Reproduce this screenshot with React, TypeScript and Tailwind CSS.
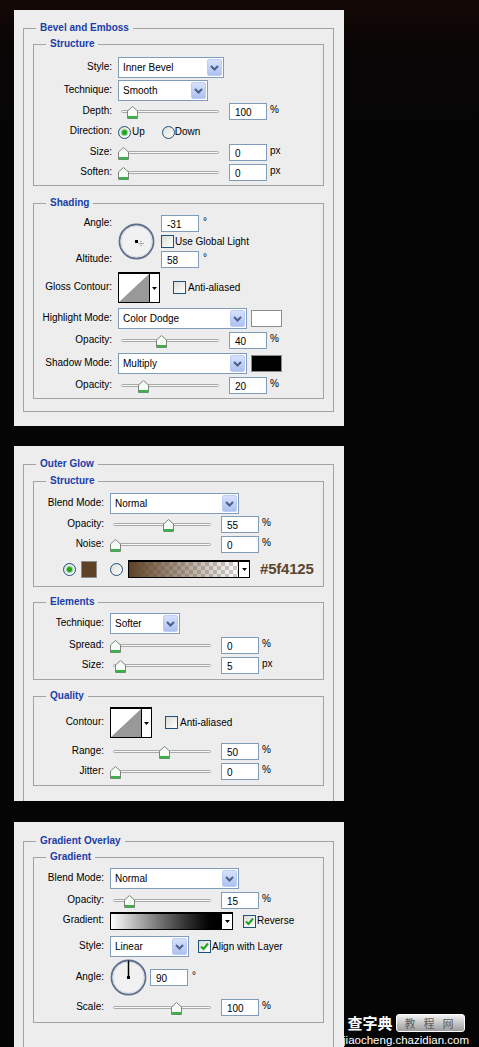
import React from 'react';

type Kids = { children?: React.ReactNode };

const Group = ({ title, className = '', children }: { title: string; className?: string } & Kids) => (
  <fieldset className={`border border-[#a3a3a3] ${className}`}>
    <legend className="ml-[12px] px-[4px] text-[10px] font-bold leading-[12px] text-[#1a3ea8]">{title}</legend>
    {children}
  </fieldset>
);

const Row = ({ label, lw, className = '', children }: { label?: string; lw: string; className?: string } & Kids) => (
  <div className={`flex items-center ${className}`}>
    <span className={`${lw} shrink-0 pb-[2px] pr-[6px] text-right`}>{label}</span>
    {children}
  </div>
);

const Chevron = () => (
  <svg width="9" height="6" viewBox="0 0 9 6">
    <path d="M1 1 L4.5 4.5 L8 1" fill="none" stroke="#4a5f8a" strokeWidth="2" />
  </svg>
);

const Select = ({ value, w }: { value: string; w: string }) => (
  <div className={`${w} flex h-[21px] shrink-0 items-center justify-between border border-[#7f9db9] bg-white pl-[4px] pr-[1px]`}>
    <span className="pt-[1px]">{value}</span>
    <span className="flex h-[17px] w-[15px] items-center justify-center rounded-[2px] border border-[#bccdf3] bg-gradient-to-b from-[#d6e1fc] to-[#adc1f0]">
      <Chevron />
    </span>
  </div>
);

const Field = ({ value, unit }: { value: string; unit?: string }) => (
  <>
    <div className="h-[17px] w-[38px] shrink-0 border border-[#7f9db9] bg-white pl-[5px] pt-[1px] leading-[15px]">{value}</div>
    {unit && <span className="ml-[3px] pb-[3px]">{unit}</span>}
  </>
);

const Degree = () => <span className="ml-[4px] pt-[2px] leading-[10px]">°</span>;

const Slider = ({ at }: { at: number }) => (
  <div className="relative mr-[7px] flex h-[17px] w-[104px] shrink-0 items-center px-[3px]">
    <div className="h-[3px] flex-1 rounded-full border border-[#a9a9a9] bg-[#f7f7f7]" />
    <svg className="absolute top-[3px]" style={{ left: at }} width="11" height="13" viewBox="0 0 11 13">
      <path d="M0.5 12.5 V5 L5.5 0.5 L10.5 5 V12.5 Z" fill="#f5fbf5" stroke="#7d857d" />
      <rect x="1" y="10" width="9" height="2.5" fill="#3cb04a" />
    </svg>
  </div>
);

const SliderRow = ({ label, lw, at, value, unit, className = '' }: { label: string; lw: string; at: number; value: string; unit: string; className?: string }) => (
  <Row label={label} lw={lw} className={`h-[17px] ${className}`}>
    <Slider at={at} />
    <Field value={value} unit={unit} />
  </Row>
);

const Radio = ({ on }: { on?: boolean }) => (
  <span className="flex h-[13px] w-[13px] shrink-0 items-center justify-center rounded-full border border-[#1c5180] bg-gradient-to-br from-[#dcdcd6] to-white">
    {on && <span className="h-[5px] w-[5px] rounded-full bg-[#21a121] shadow-[0_0_0_1px_#8fd48f]" />}
  </span>
);

const Check = ({ on }: { on?: boolean }) => (
  <span className="flex h-[13px] w-[13px] shrink-0 items-center justify-center border border-[#1c5180] bg-gradient-to-br from-[#dcdcd6] to-white">
    {on && (
      <svg width="9" height="9" viewBox="0 0 9 9">
        <path d="M1 4.5 L3.5 7 L8 1.5" fill="none" stroke="#21a121" strokeWidth="2" />
      </svg>
    )}
  </span>
);

const DropArrow = () => (
  <svg width="5" height="3" viewBox="0 0 5 3">
    <polygon points="0,0 5,0 2.5,3" fill="#000" />
  </svg>
);

const Contour = () => (
  <div className="flex h-[31px] w-[42px] shrink-0 border border-t-2 border-black bg-white">
    <svg width="30" height="28" viewBox="0 0 30 28" preserveAspectRatio="none">
      <polygon points="0,28 30,0 30,28" fill="#999" />
    </svg>
    <div className="flex flex-1 items-center justify-center border-l border-black">
      <DropArrow />
    </div>
  </div>
);

const GradientBox = ({ w, fill }: { w: string; fill: string }) => (
  <div className={`${w} flex h-[18px] shrink-0 border border-t-2 border-black bg-white`}>
    <div className={`flex-1 ${fill}`} />
    <div className="flex w-[11px] items-center justify-center border-l border-black">
      <DropArrow />
    </div>
  </div>
);

const Dial = ({ mode }: { mode: 'dot' | 'line' }) => (
  <svg width="37" height="37" viewBox="0 0 37 37" className="shrink-0">
    <circle cx="18.5" cy="18.5" r="17" fill="#f1f1f1" stroke="#5f6e8c" strokeWidth="1.8" />
    <circle cx="18.5" cy="18.5" r="15.5" fill="none" stroke="#d6d9df" strokeWidth="1" />
    {mode === 'dot' ? (
      <>
        <rect x="17" y="17" width="3" height="3" fill="#000" />
        <path d="M23 18 V23 M20.5 20.5 H25.5" stroke="#777" strokeWidth="1" strokeDasharray="1 1" />
      </>
    ) : (
      <>
        <line x1="18.5" y1="18.5" x2="18.5" y2="1.5" stroke="#000" strokeWidth="1.5" />
        <rect x="17" y="17" width="3" height="3" fill="#000" />
      </>
    )}
  </svg>
);

const P1 = 'w-[84px]';
const P2 = 'w-[76px]';

const Inner = ({ title, className = '', pad, children }: { title: string; className?: string; pad: string } & Kids) => (
  <Group title={title} className={`mx-[9px] ${className}`}>
    <div className={`flex flex-col ${pad}`}>{children}</div>
  </Group>
);

export default function App() {
  return (
    <div className="relative h-[1047px] w-[479px] overflow-hidden bg-[#050404] [background-image:linear-gradient(#150806,#080505_50px,#050505_200px)] font-['Liberation_Sans',Arial,sans-serif] text-[10px] leading-[12px] text-black">
      <div className="flex flex-col pl-[14px] pt-[10px]">
        {/* Bevel and Emboss */}
        <div className="h-[416px] w-[330px] overflow-hidden bg-[#ededed] pl-[9px] pr-[10px] pt-[12px]">
          <Group title="Bevel and Emboss" className="pb-[12px] pt-[4px]">
            <Inner title="Structure" pad="pt-[7px] pb-[4px]">
              <Row label="Style:" lw={P1}>
                <Select value="Inner Bevel" w="w-[106px]" />
              </Row>
              <Row label="Technique:" lw={P1} className="mt-[2px]">
                <Select value="Smooth" w="w-[90px]" />
              </Row>
              <SliderRow label="Depth:" lw={P1} at={9} value="100" unit="%" className="mt-[2px]" />
              <Row label="Direction:" lw={P1} className="mt-[5px] h-[14px]">
                <Radio on />
                <span className="ml-[1px]">Up</span>
                <span className="ml-[17px]">
                  <Radio />
                </span>
                <span className="ml-[0px]">Down</span>
              </Row>
              <SliderRow label="Size:" lw={P1} at={0} value="0" unit="px" className="mt-[5px]" />
              <SliderRow label="Soften:" lw={P1} at={0} value="0" unit="px" className="mt-[3px]" />
            </Inner>

            <Inner title="Shading" className="mt-[11px]" pad="pt-[6px] pb-[4px]">
              <div className="flex h-[53px]">
                <div className={`${P1} flex shrink-0 flex-col justify-between pr-[6px] text-right`}>
                  <span className="h-[17px] leading-[15px]">Angle:</span>
                  <span className="h-[17px] leading-[15px]">Altitude:</span>
                </div>
                <div className="self-center">
                  <Dial mode="dot" />
                </div>
                <div className="ml-[6px] flex flex-col">
                  <div className="flex items-start">
                    <Field value="-31" />
                    <Degree />
                  </div>
                  <div className="mt-[3px] flex items-center">
                    <Check />
                    <span className="ml-[1px]">Use Global Light</span>
                  </div>
                  <div className="mt-[3px] flex items-start">
                    <Field value="58" />
                    <Degree />
                  </div>
                </div>
              </div>
              <Row label="Gloss Contour:" lw={P1} className="mt-[4px]">
                <Contour />
                <span className="ml-[13px]">
                  <Check />
                </span>
                <span className="ml-[2px]">Anti-aliased</span>
              </Row>
              <Row label="Highlight Mode:" lw={P1} className="mt-[5px]">
                <Select value="Color Dodge" w="w-[129px]" />
                <span className="ml-[4px] h-[17px] w-[31px] border border-[#8d8d8d] bg-white" />
              </Row>
              <SliderRow label="Opacity:" lw={P1} at={38} value="40" unit="%" className="mt-[3px]" />
              <Row label="Shadow Mode:" lw={P1} className="mt-[4px]">
                <Select value="Multiply" w="w-[129px]" />
                <span className="ml-[4px] h-[17px] w-[31px] border border-[#8d8d8d] bg-black" />
              </Row>
              <SliderRow label="Opacity:" lw={P1} at={20} value="20" unit="%" className="mt-[3px]" />
            </Inner>
          </Group>
        </div>

        {/* Outer Glow */}
        <div className="mt-[20px] h-[355px] w-[330px] overflow-hidden bg-[#ededed] pl-[9px] pr-[10px] pt-[12px]">
          <Group title="Outer Glow" className="pb-[40px] pt-[5px]">
            <Inner title="Structure" pad="pt-[6px] pb-[8px]">
              <Row label="Blend Mode:" lw={P2}>
                <Select value="Normal" w="w-[129px]" />
              </Row>
              <SliderRow label="Opacity:" lw={P2} at={53} value="55" unit="%" className="mt-[2px]" />
              <SliderRow label="Noise:" lw={P2} at={0} value="0" unit="%" className="mt-[3px]" />
              <div className="mt-[7px] flex h-[18px] items-center pl-[29px]">
                <Radio on />
                <span className="ml-[5px] h-[17px] w-[16px] border border-[#8c8c8c] bg-[#5f4125]" />
                <span className="ml-[13px]">
                  <Radio />
                </span>
                <span className="ml-[5px]">
                  <GradientBox
                    w="w-[122px]"
                    fill="[background-image:linear-gradient(to_right,#5f4125,rgba(95,65,37,0)),repeating-conic-gradient(#cdcdcd_0_25%,#ffffff_0_50%)] [background-size:100%_100%,8px_8px]"
                  />
                </span>
                <span className="ml-[10px] text-[15px] font-bold leading-[18px] tracking-[-0.2px] text-[#5c4630]">#5f4125</span>
              </div>
            </Inner>

            <Inner title="Elements" className="mt-[9px]" pad="pt-[5px] pb-[5px]">
              <Row label="Technique:" lw={P2}>
                <Select value="Softer" w="w-[70px]" />
              </Row>
              <SliderRow label="Spread:" lw={P2} at={0} value="0" unit="%" className="mt-[3px]" />
              <SliderRow label="Size:" lw={P2} at={5} value="5" unit="px" className="mt-[3px]" />
            </Inner>

            <Inner title="Quality" className="mt-[10px]" pad="pt-[5px] pb-[5px]">
              <Row label="Contour:" lw={P2}>
                <Contour />
                <span className="ml-[13px]">
                  <Check />
                </span>
                <span className="ml-[2px]">Anti-aliased</span>
              </Row>
              <SliderRow label="Range:" lw={P2} at={49} value="50" unit="%" className="mt-[5px]" />
              <SliderRow label="Jitter:" lw={P2} at={0} value="0" unit="%" className="mt-[3px]" />
            </Inner>
          </Group>
        </div>

        {/* Gradient Overlay */}
        <div className="mt-[21px] h-[225px] w-[330px] overflow-hidden bg-[#ededed] pl-[9px] pr-[10px] pt-[13px]">
          <Group title="Gradient Overlay" className="pb-[40px] pt-[4px]">
            <Inner title="Gradient" pad="pt-[5px] pb-[6px]">
              <Row label="Blend Mode:" lw={P2}>
                <Select value="Normal" w="w-[129px]" />
              </Row>
              <SliderRow label="Opacity:" lw={P2} at={14} value="15" unit="%" className="mt-[3px]" />
              <Row label="Gradient:" lw={P2} className="mt-[3px]">
                <GradientBox w="w-[123px]" fill="bg-gradient-to-r from-white to-black" />
                <span className="ml-[10px]">
                  <Check on />
                </span>
                <span className="ml-[1px]">Reverse</span>
              </Row>
              <Row label="Style:" lw={P2} className="mt-[6px]">
                <Select value="Linear" w="w-[79px]" />
                <span className="ml-[9px]">
                  <Check on />
                </span>
                <span className="ml-[1px]">Align with Layer</span>
              </Row>
              <Row label="Angle:" lw={P2} className="mt-[2px]">
                <Dial mode="line" />
                <span className="ml-[3px] flex items-start">
                  <Field value="90" />
                  <Degree />
                </span>
              </Row>
              <SliderRow label="Scale:" lw={P2} at={61} value="100" unit="%" className="mt-[3px]" />
            </Inner>
          </Group>
        </div>
      </div>

      {/* watermark */}
      <div className="absolute bottom-0 right-[10px] flex flex-col items-center">
        <div className="flex h-[22px] items-center">
          <span className="font-['Noto_Sans_CJK_SC',sans-serif] text-[15px] font-bold leading-[22px] text-white">查字典</span>
          <span className="ml-[3px] rounded-[3px] border border-white bg-gradient-to-b from-[#f2f2f2] to-[#9d9d9d] pl-[8px] pr-[2px] font-['Noto_Sans_CJK_SC',sans-serif] text-[11px] leading-[16px] tracking-[8px] text-[#5c5c5c]">
            教程网
          </span>
        </div>
        <span className="text-[11.5px] leading-[13px] text-white">jiaocheng.chazidian.com</span>
      </div>
    </div>
  );
}
